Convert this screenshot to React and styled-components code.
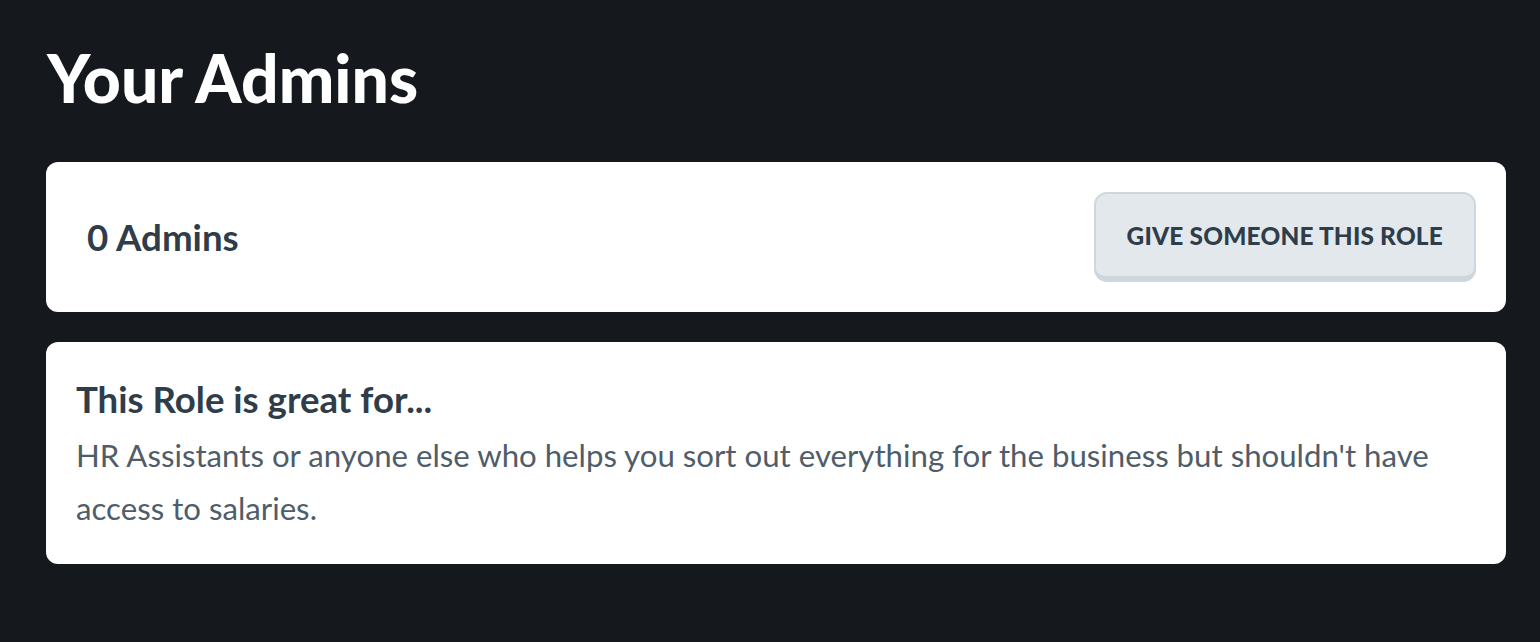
import React from "react";
import styled, { createGlobalStyle } from "styled-components";

const GlobalStyle = createGlobalStyle`
  html, body {
    margin: 0;
    padding: 0;
    background: #15191d;
  }
  body {
    font-family: "Lato", "Noto Sans", sans-serif;
  }
`;

const Page = styled.main`
  min-height: 642px;
  box-sizing: border-box;
  padding: 40px 34px 40px 46px;
  display: flex;
  flex-direction: column;
  gap: 30px;
`;

const Heading = styled.h1`
  margin: 0 0 16px 1px;
  color: #ffffff;
  font-size: 66px;
  font-weight: 900;
  line-height: 76px;
`;

const Card = styled.section`
  background: #ffffff;
  border-radius: 12px;
  box-sizing: border-box;
  padding: ${(p) => p.$padding || "30px"};
`;

const Row = styled.div`
  display: flex;
  align-items: center;
  justify-content: space-between;
`;

const Count = styled.h2`
  margin: 0 0 0 11px;
  color: #2f3d4a;
  font-size: 36.7px;
  font-weight: 700;
`;

const RoleButton = styled.button`
  height: 90px;
  box-sizing: border-box;
  padding: 0 31px;
  background: #e2e8ec;
  border: 2px solid #cdd7dc;
  border-bottom-width: 6px;
  border-radius: 13px;
  color: #2f3d4a;
  font-family: inherit;
  font-size: 24.4px;
  font-weight: 900;
  letter-spacing: 0.2px;
  text-transform: uppercase;
  cursor: pointer;
`;

const Title = styled.h3`
  margin: 0;
  color: #2f3d4a;
  font-size: 36.6px;
  font-weight: 700;
  line-height: 40px;
`;

const Body = styled.p`
  margin: 10px 0 0;
  max-width: 1370px;
  color: #4f5d6a;
  font-size: 31.2px;
  font-weight: 400;
  line-height: 53px;
`;

export default function App() {
  return (
    <>
      <GlobalStyle />
      <Page>
        <Heading>Your Admins</Heading>
        <Card>
          <Row>
            <Count>0 Admins</Count>
            <RoleButton type="button">Give someone this role</RoleButton>
          </Row>
        </Card>
        <Card $padding="37px 30px 29px">
          <Title>This Role is great for...</Title>
          <Body>
            HR Assistants or anyone else who helps you sort out everything for
            the business but shouldn't have access to salaries.
          </Body>
        </Card>
      </Page>
    </>
  );
}
